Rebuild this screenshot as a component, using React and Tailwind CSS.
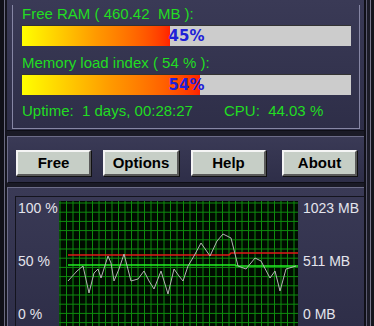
import React from "react";

const gray = [
  [9, 80], [18, 70], [24, 65], [30, 92], [35, 72], [39, 68], [42, 77], [49, 55], [52, 62], [55, 80],
  [60, 68], [65, 53], [72, 80], [79, 78], [85, 70], [90, 80], [95, 88], [102, 70], [109, 93], [115, 68],
  [120, 75], [124, 80], [129, 65], [135, 55], [142, 42], [151, 55], [158, 40], [164, 33], [172, 37],
  [179, 65], [187, 68], [196, 57], [202, 60], [211, 77], [216, 70], [221, 90], [227, 68], [237, 65],
];

const Graph = () => {
  const w = 239;
  const h = 125;
  const vx = [];
  for (let x = 1; x < w; x += 6.5) vx.push(x);
  const hy = [];
  for (let y = 2; y < h; y += 9.2) hy.push(y);
  return (
    <svg width={w} height={h} className="block bg-[#000c00]">
      {vx.map((x) => (
        <line key={"v" + x} x1={x} y1={0} x2={x} y2={h} stroke="#0e8c0e" strokeWidth="1" />
      ))}
      {hy.map((y) => (
        <line key={"h" + y} x1={0} y1={y} x2={w} y2={y} stroke="#0e8c0e" strokeWidth="1" />
      ))}
      <polyline points="9,54 170,54 172,52 239,52" fill="none" stroke="#e01818" strokeWidth="1.5" />
      <polyline points="9,64 176,64 178,65 239,65" fill="none" stroke="#22ee22" strokeWidth="1.5" />
      <polyline points={gray.map((p) => p.join(",")).join(" ")} fill="none" stroke="#b4b4b4" strokeWidth="1" />
    </svg>
  );
};

const Bar = ({ pct }) => (
  <div className="relative w-[329px] h-[21px] bg-[#cccccc] border-t border-[#333]">
    <div
      className="h-full bg-linear-to-r from-[#ffff00] via-[#ff9900] to-[#ff2200]"
      style={{ width: pct + "%" }}
    />
    <span className="absolute inset-0 flex items-center justify-center text-[15px] font-bold text-[#2020d8] font-['DejaVu_Sans',sans-serif]">
      {pct}%
    </span>
  </div>
);

const Btn = ({ children, className }) => (
  <button
    type="button"
    className={
      "h-[26px] bg-[#c6cec6] border-2 border-t-[#f4f4f4] border-l-[#f4f4f4] border-b-[#5a5a5a] border-r-[#5a5a5a] text-[15px] font-bold text-black shadow-[1px_1px_0_#111] " +
      className
    }
  >
    {children}
  </button>
);

export default function App() {
  return (
    <div className="w-[374px] h-[326px] overflow-hidden bg-[#1a1a26] flex font-['Liberation_Sans',Arial,sans-serif]">
      {/* left frame */}
      <div className="w-[4px] bg-[#101018]" />
      <div className="w-[1px] bg-[#6a6a80]" />
      <div className="w-[2px] bg-[#15151f]" />

      <div className="w-[357px] flex flex-col">
        {/* stats panel */}
        <div className="h-[134px] pl-[5px] pr-[4px] pb-[6px] bg-linear-to-b from-[#3a3a56] to-[#2e2e48] border-b border-[#0e0e16]">
          <div className="h-full border-x border-b border-[#8686a4] pl-[9px] text-[15px] text-[#22dd22] leading-[17px]">
            <div className="mt-[5px] whitespace-pre">Free RAM ( 460.42  MB ):</div>
            <div className="mt-[3px]">
              <Bar pct={45} />
            </div>
            <div className="mt-[8px] whitespace-pre">Memory load index ( 54 % ):</div>
            <div className="mt-[3px]">
              <Bar pct={54} />
            </div>
            <div className="mt-[7px] flex whitespace-pre">
              <span className="w-[202px]">Uptime:  1 days, 00:28:27</span>
              <span>CPU:  44.03 %</span>
            </div>
          </div>
        </div>

        <div className="h-[5px]" />

        {/* buttons panel */}
        <div className="h-[48px] flex items-start pt-[13px] bg-linear-to-b from-[#3a3a56] to-[#2e2e48] border-t border-l border-[#6c6c88] border-b-[#0e0e16] border-b">
          <Btn className="ml-[8px] w-[75px]">Free</Btn>
          <Btn className="ml-[12px] w-[76px]">Options</Btn>
          <Btn className="ml-[12px] w-[75px]">Help</Btn>
          <Btn className="ml-[16px] w-[75px]">About</Btn>
        </div>

        <div className="h-[4px]" />

        {/* graph panel */}
        <div className="flex-1 pl-[7px] pt-[8px] bg-linear-to-b from-[#3a3a56] to-[#2e2e48] border-t border-l border-[#6c6c88]">
          <div className="h-full flex border-t border-l border-[#14141e] pt-[4px] text-[14px] leading-[17px] text-[#e4e4ec]">
            <div className="w-[43px] flex flex-col gap-[36px] pl-[2px] -mt-[1px] whitespace-pre">
              <span>100 %</span>
              <span>50 %</span>
              <span>0 %</span>
            </div>
            <Graph />
            <div className="flex flex-col gap-[36px] pl-[5px] -mt-[1px] whitespace-pre">
              <span>1023 MB</span>
              <span>511 MB</span>
              <span>0 MB</span>
            </div>
          </div>
        </div>
      </div>

      {/* right frame */}
      <div className="w-[2px] bg-[#101018]" />
      <div className="w-[1px] bg-[#5a5a70]" />
      <div className="w-[3px] bg-[#1c1c28]" />
      <div className="w-[1px] bg-[#7a7a90]" />
      <div className="flex-1 bg-[#14141c]" />
    </div>
  );
}
